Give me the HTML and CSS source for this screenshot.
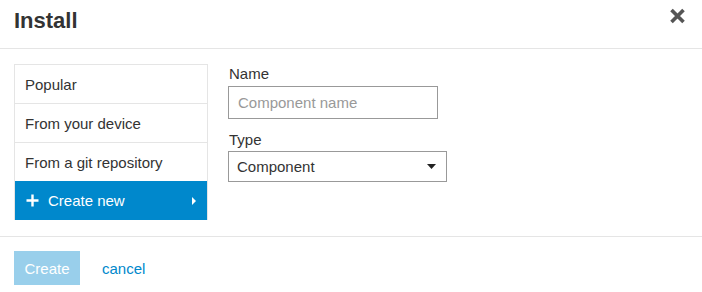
FILE: index.html
```html
<!DOCTYPE html>
<html>
<head>
<meta charset="utf-8">
<link rel="stylesheet" href="styles.css">
</head>
<body>
<div class="dialog">
  <header class="dlg-head">
    <h1 class="dlg-title">Install</h1>
    <button class="close" aria-label="Close">
      <svg width="17" height="16" viewBox="0 0 17 16"><path d="M2.5 2 L14.5 14 M14.5 2 L2.5 14" stroke="#555" stroke-width="3.6" stroke-linecap="butt"/></svg>
    </button>
  </header>
  <main class="dlg-body">
    <nav class="menu">
      <div class="menu-item">Popular</div>
      <div class="menu-item">From your device</div>
      <div class="menu-item">From a git repository</div>
      <div class="menu-item active">
        <svg class="plus" width="13" height="13" viewBox="0 0 13 13"><path d="M6.5 0.5v12M0.5 6.5h12" stroke="#fff" stroke-width="2.4"/></svg>
        <span class="active-label">Create new</span>
        <svg class="chev" width="4" height="8" viewBox="0 0 4 8"><path d="M0 0 L4 4 L0 8 Z" fill="#fff"/></svg>
      </div>
    </nav>
    <form class="form">
      <label class="field-label">Name</label>
      <input class="text-input" type="text" placeholder="Component name">
      <label class="field-label type-label">Type</label>
      <div class="select">
        <span>Component</span>
        <svg width="9" height="5" viewBox="0 0 9 5"><path d="M0 0 L9 0 L4.5 5 Z" fill="#222"/></svg>
      </div>
    </form>
  </main>
  <footer class="dlg-foot">
    <button class="btn-create">Create</button>
    <a class="cancel" href="#">cancel</a>
  </footer>
</div>
</body>
</html>
```
FILE: styles.css
```css
* { box-sizing: border-box; }
html, body { margin: 0; padding: 0; background: #fff; }
body { font-family: "Liberation Sans", Arial, sans-serif; color: #333; font-size: 15px; }
.dialog { width: 702px; height: 292px; display: flex; flex-direction: column; }
.dlg-head { height: 49px; display: flex; align-items: center; justify-content: space-between; padding: 0 16px 0 14px; border-bottom: 1px solid #e5e5e5; }
.dlg-title { margin: 0; font-size: 22px; font-weight: bold; color: #333; position: relative; top: -3px; }
.close { background: none; border: none; padding: 0; width: 17px; height: 16px; position: relative; top: -8px; cursor: pointer; }
.close svg { display: block; }
.dlg-body { display: flex; padding: 15px 14px 0; gap: 20px; height: 188px; border-bottom: 1px solid #e5e5e5; }
.menu { width: 194px; border: 1px solid #e5e5e5; border-bottom: none; align-self: flex-start; }
.menu-item { height: 39px; display: flex; align-items: center; padding: 0 10px; border-bottom: 1px solid #e5e5e5; color: #333; }
.menu-item.active { background: #0088cc; color: #fff; border-bottom: none; height: 39px; margin-top: -1px; padding: 0 10px 0 11px; }
.plus { margin-right: 9px; }
.active-label { flex: 1; font-size: 15px; }
.chev { margin-right: 1px; }
.form { display: flex; flex-direction: column; align-items: flex-start; }
.field-label { font-size: 15px; color: #333; line-height: 17px; margin-top: 1px; padding-left: 1px; }
.text-input { margin-top: 4px; width: 210px; height: 33px; border: 1px solid #999; padding: 0 9px; font-family: inherit; font-size: 15px; color: #333; outline: none; }
.text-input::placeholder { color: #999; }
.type-label { margin-top: 12px; }
.select { margin-top: 3px; width: 219px; height: 31px; border: 1px solid #999; display: flex; align-items: center; justify-content: space-between; padding: 0 10px 0 8px; font-size: 15px; color: #333; }
.dlg-foot { display: flex; align-items: center; padding: 14px 14px 0; gap: 22px; }
.btn-create { width: 66px; height: 34px; background: #99cfeb; color: #fff; border: none; font-family: inherit; font-size: 15px; padding: 0; }
.cancel { color: #0088cc; text-decoration: none; font-size: 15px; }
```
